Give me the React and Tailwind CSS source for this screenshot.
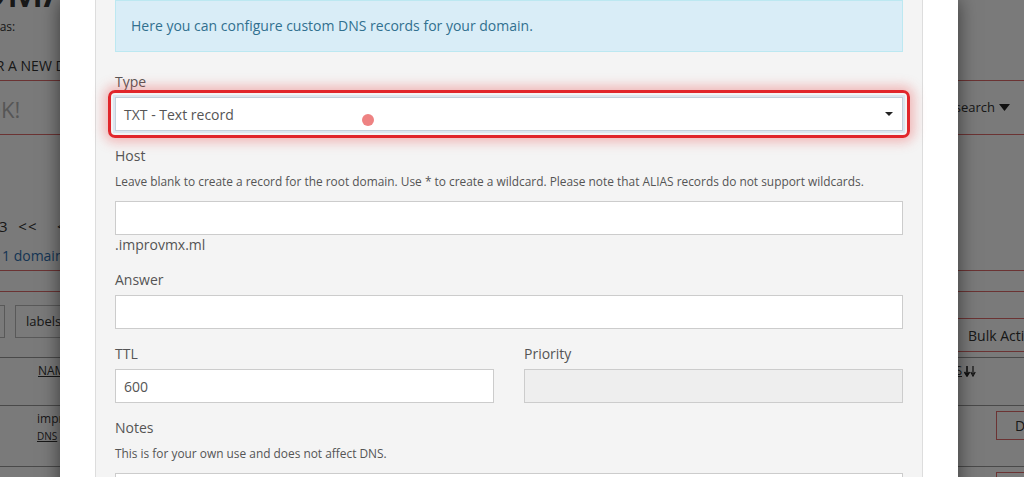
import React from 'react';

function Label({ children }) {
  return <div className="text-[14px] leading-[20px] text-[#555] mb-[5px]">{children}</div>;
}

function Help({ children }) {
  return <div className="text-[11.9px] leading-[20px] text-[#555] mb-[10px] whitespace-nowrap">{children}</div>;
}

function Input({ value, disabled }) {
  return (
    <div
      className={`h-[34px] border border-[#ccc] px-[8px] flex items-center text-[14px] text-[#555] ${
        disabled ? 'bg-[#eee]' : 'bg-white'
      }`}
    >
      {value}
    </div>
  );
}

function BackgroundPage() {
  return (
    <div className="w-full flex flex-col text-[#333]">
      {/* page title, scrolled mostly out of view */}
      <div className="h-[14px] overflow-visible">
        <div className="text-[40px] leading-[40px] font-semibold -mt-[28px] -ml-[54px] whitespace-nowrap">DOMAINS</div>
      </div>
      <div className="h-[26px] flex items-center">
        <span className="text-[12px] -ml-[14px] whitespace-nowrap">Alias:</span>
      </div>
      <div className="h-[41px] flex items-center pt-[10px] border-b border-[#e06c6c]">
        <span className="text-[14px] uppercase -ml-[38px] whitespace-nowrap">Enter a new domain</span>
      </div>
      <div className="h-[54px] flex items-center justify-between border-b border-[#e06c6c]">
        <span className="text-[22px] text-[#b5b5b5] -ml-[16px] pt-[4px]">OK!</span>
        <span className="text-[13px] flex items-center gap-[4px] mr-[14px]">
          search
          <svg width="11" height="7" viewBox="0 0 11 7"><path d="M0 0h11L5.5 7z" fill="#222" /></svg>
        </span>
      </div>
      <div className="h-[106px] flex items-end pb-[4px]">
        <span className="text-[15px] -ml-[1px] whitespace-nowrap tracking-[1px]">3&nbsp;&nbsp;&lt;&lt;&nbsp;&nbsp;&nbsp;&nbsp;&lt;</span>
      </div>
      <div className="h-[30px] flex items-center border-b border-[#e06c6c]">
        <span className="text-[14px] text-[#2f6fb0] whitespace-nowrap ml-[2px]">1 domain</span>
      </div>
      <div className="h-[21px] border-b border-[#e06c6c]" />
      <div className="h-[66px] flex justify-between border-b border-[#999]">
        <div className="flex gap-[10px] mt-[13px]">
          <div className="w-[30px] h-[33px] -ml-[25px] border border-[#bbb]" />
          <div className="h-[33px] px-[10px] border border-[#bbb] flex items-center text-[13px]">labels</div>
        </div>
        <div className="mt-[26px] h-[34px] w-[66px] border-y border-[#e06c6c] flex items-center pl-[10px] text-[14px] whitespace-nowrap overflow-hidden">
          Bulk Actions
        </div>
      </div>
      <div className="h-[48px] flex justify-between items-start pt-[4px] border-b border-[#999]">
        <span className="text-[12px] underline ml-[38px]">NAME</span>
        <span className="text-[12px] mr-[48px] flex items-center gap-[2px]">
          <span className="underline">S</span>
          <svg width="12" height="11" viewBox="0 0 12 11">
            <path d="M3 0v8M0.5 6L3 10l2.5-4" stroke="#222" strokeWidth="1.6" fill="none" />
            <path d="M9 0v8M6.8 6L9 10l2.2-4" stroke="#222" strokeWidth="1.2" fill="none" />
          </svg>
        </span>
      </div>
      <div className="h-[61px] flex justify-between border-b border-[#999]">
        <div className="ml-[37px] flex flex-col pt-[4px]">
          <span className="text-[12px] leading-[18px]">improvmx.ml</span>
          <span className="text-[10px] leading-[16px] underline">DNS</span>
        </div>
        <div className="mt-[5px] w-[40px] h-[29px] -mr-[12px] border border-[#e06c6c] flex items-center pl-[18px] text-[14px]">D</div>
      </div>
      <div className="flex justify-end mt-[5px]">
        <div className="w-[40px] h-[20px] -mr-[12px] border border-[#e06c6c]" />
      </div>
    </div>
  );
}

export default function App() {
  return (
    <div className="relative w-[1024px] h-[477px] overflow-hidden bg-white font-['Open_Sans',sans-serif]">
      <BackgroundPage />

      {/* dim overlay */}
      <div className="absolute inset-0 bg-black/[0.52]" />

      {/* modal */}
      <div className="absolute top-0 left-[60px] w-[898px] h-[520px] bg-white shadow-[0_0_18px_rgba(0,0,0,0.55)] px-[35px]">
        <div className="-mt-[21px] border border-[#ddd] bg-[#f4f4f4] px-[19px] pt-[20px] pb-[20px]">
          <div className="border border-[#bce8f1] bg-[#d9edf7] text-[#31708f] text-[14px] leading-[20px] px-[15px] py-[15px] mb-[20px]">
            Here you can configure custom DNS records for your domain.
          </div>

          <div className="mb-[15px]">
            <Label>Type</Label>
            <div className="relative">
              <div className="absolute -inset-[7px] rounded-[7px] border-[3px] border-[#e1262b] shadow-[0_0_12px_4px_rgba(235,70,70,0.35)]" />
              <div className="relative h-[34px] border border-[#c4d0da] shadow-[0_0_0_2px_#dce7ef] bg-white px-[8px] flex items-center justify-between text-[14px] text-[#555]">
                <span>TXT - Text record</span>
                <svg width="8" height="4" viewBox="0 0 8 4" className="mr-[1px]"><path d="M0 0h8L4 4z" fill="#222" /></svg>
              </div>
              <div className="absolute left-[247px] top-[17px] w-[12px] h-[12px] rounded-full bg-[#ee8282]" />
            </div>
          </div>

          <div className="mb-[15px]">
            <Label>Host</Label>
            <Help>
              Leave blank to create a record for the root domain. Use * to create a wildcard. Please note that ALIAS records do not support wildcards.
            </Help>
            <Input />
            <div className="text-[14px] leading-[20px] text-[#555]">.improvmx.ml</div>
          </div>

          <div className="mb-[15px]">
            <Label>Answer</Label>
            <Input />
          </div>

          <div className="grid grid-cols-2 gap-[30px] mb-[15px]">
            <div>
              <Label>TTL</Label>
              <Input value="600" />
            </div>
            <div>
              <Label>Priority</Label>
              <Input disabled />
            </div>
          </div>

          <div>
            <Label>Notes</Label>
            <Help>This is for your own use and does not affect DNS.</Help>
            <Input />
          </div>
        </div>
      </div>
    </div>
  );
}
